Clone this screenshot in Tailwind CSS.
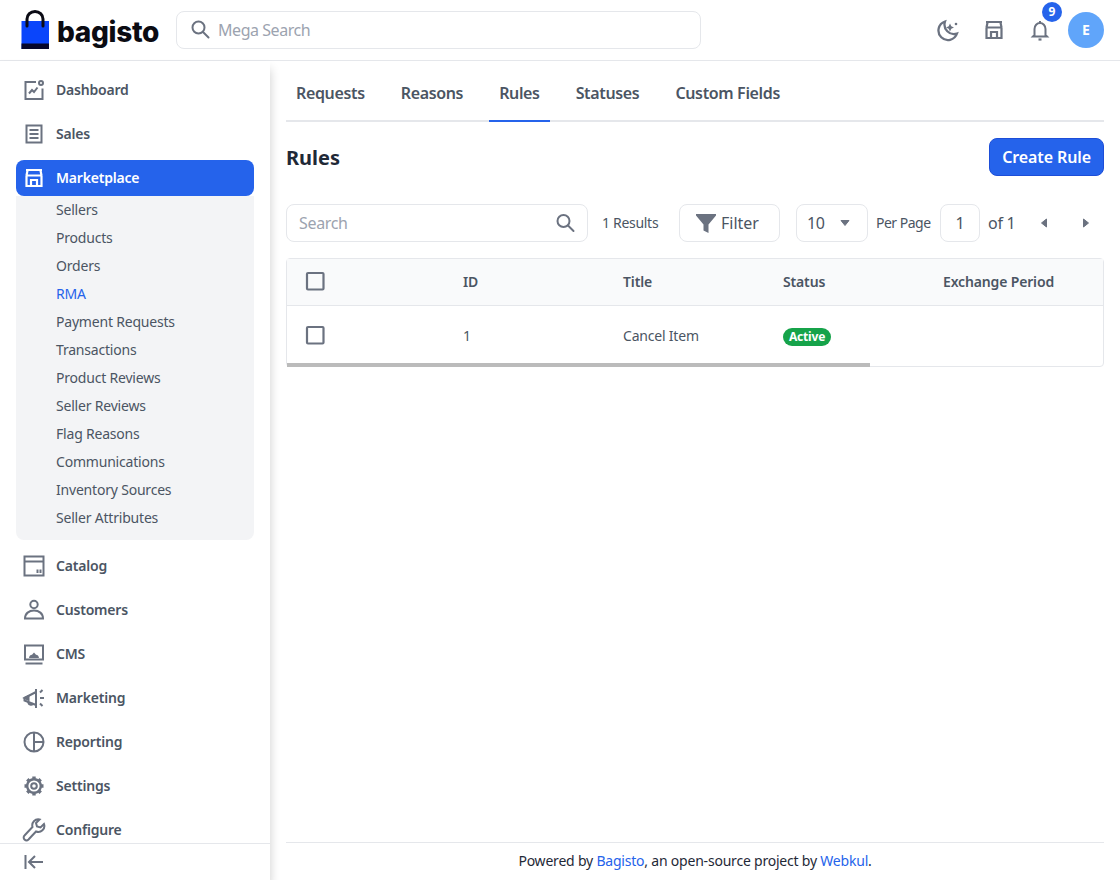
<!DOCTYPE html>
<html>
  <head>
    <meta charset="UTF-8" />
    <title>Rules</title>
    <script src="https://cdn.jsdelivr.net/npm/@tailwindcss/browser@4"></script>
  </head>
  <body class="h-screen overflow-hidden bg-white font-['Noto_Sans',sans-serif] text-[#4b5563] flex flex-col">
    <!-- top bar -->
    <header class="h-[61px] shrink-0 flex items-center justify-between border-b border-gray-200 pl-5 pr-4 bg-white">
      <div class="flex items-center">
        <div class="flex items-center w-[156px] gap-[7px]">
          <svg width="30" height="40" viewBox="0 0 30 40" class="shrink-0">
            <rect x="1.500" y="11" width="27.500" height="28" fill="#0a45fb" />
            <rect x="1.500" y="33.500" width="27.500" height="5.500" fill="#06062a" />
            <path d="M7 16V9a8 7.500 0 0 1 16 0v7" fill="none" stroke="#0b0b14" stroke-width="3" stroke-linecap="round" />
          </svg>
          <span class="font-['Inter',sans-serif] font-extrabold text-[28px] leading-none pt-[3px] tracking-[-0.3px] text-[#0b0b12]">bagisto</span>
        </div>
        <div class="w-[525px] h-[38px] border border-gray-200 rounded-lg flex items-center pl-[11px] gap-1.5">
          <svg width="24" height="24" viewBox="0 0 24 24" fill="none" stroke="#6b7280" stroke-width="2" stroke-linecap="round"><circle cx="10.500" cy="9.500" r="6" /><path d="M15 14l5.500 5.500" /></svg>
          <span class="text-[#9ca3af] text-base tracking-[-0.45px]">Mega Search</span>
        </div>
      </div>
      <div class="flex items-center">
        <svg width="24" height="24" viewBox="0 0 24 24" fill="none" stroke="#6b7280" stroke-width="2.300" class="mr-[22px]"><path d="M9 3.500a9.500 9.500 0 1 0 12 12A9.500 9.500 0 0 1 9 3.500z" /><path d="M14 5.500l1.300 2.700 2.700 1.300-2.700 1.300-1.300 2.700-1.300-2.700-2.700-1.300 2.700-1.300z" fill="#6b7280" stroke="none" /><circle cx="20" cy="6" r="1.300" fill="#6b7280" stroke="none" /></svg>
        <svg width="24" height="24" viewBox="0 0 24 24" fill="none" stroke="#6b7280" stroke-width="2.200" class="mr-[22px]"><path d="M4 4h16M3.500 9.500h17M4.500 9.500l1-5M19.500 9.500l-1-5M4.500 9.500v10.500h15V9.500M9 20v-6h6v6" /></svg>
        <div class="relative mr-[16px]">
          <svg width="24" height="24" viewBox="0 0 24 24" fill="none" stroke="#6b7280" stroke-width="2" class="block"><path d="M6.500 17V11a5.500 6 0 0 1 11 0v6l1.500 1.500h-14z" /><path d="M10.500 21.500h3" stroke-width="2.200" /><path d="M12 3v2" /></svg>
          <span class="absolute left-[14px] top-[-16px] w-5 h-5 rounded-full bg-[#2563eb] text-white text-xs font-bold flex items-center justify-center">9</span>
        </div>
        <div class="w-9 h-9 rounded-full bg-[#60a5fa] text-white font-bold text-sm flex items-center justify-center">E</div>
      </div>
    </header>

    <div class="flex flex-1 min-h-0">
      <!-- sidebar -->
      <aside class="w-[270px] shrink-0 flex flex-col bg-white shadow-[0_8px_10px_0_rgba(0,0,0,0.2)]">
        <nav class="flex-1 min-h-0 overflow-hidden px-4 pt-[11px] flex flex-col gap-2 text-sm font-semibold tracking-[-0.2px]">
          <a class="h-9 shrink-0 flex items-center gap-[10px] pl-1.5">
            <svg width="24" height="24" viewBox="0 0 24 24" fill="none" stroke="#6b7280" stroke-width="2"><path d="M14 4H3.500v17h17V10.500" /><path d="M7 15.500l3-3.500 2 2 3.500-4.500" /><circle cx="19" cy="5" r="2" /></svg>
            Dashboard
          </a>
          <a class="h-9 shrink-0 flex items-center gap-[10px] pl-1.5">
            <svg width="24" height="24" viewBox="0 0 24 24" fill="none" stroke="#6b7280" stroke-width="2"><rect x="4.500" y="3.500" width="15" height="17" /><path d="M7.500 8h9M7.500 12h9M7.500 16h9" /></svg>
            Sales
          </a>
          <div class="shrink-0">
            <a class="h-9 flex items-center gap-[10px] pl-1.5 bg-[#2563eb] text-white rounded-lg">
              <svg width="24" height="24" viewBox="0 0 24 24" fill="none" stroke="#fff" stroke-width="2.200"><path d="M4 4h16M3.500 9.500h17M4.500 9.500l1-5M19.500 9.500l-1-5M4.500 9.500v10.500h15V9.500M9 20v-6h6v6" /></svg>
              Marketplace
            </a>
            <ul class="bg-gray-100 rounded-b-lg pb-2 font-normal">
              <li class="h-7 pl-10 flex items-center">Sellers</li>
              <li class="h-7 pl-10 flex items-center">Products</li>
              <li class="h-7 pl-10 flex items-center">Orders</li>
              <li class="h-7 pl-10 flex items-center text-[#2563eb]">RMA</li>
              <li class="h-7 pl-10 flex items-center">Payment Requests</li>
              <li class="h-7 pl-10 flex items-center">Transactions</li>
              <li class="h-7 pl-10 flex items-center">Product Reviews</li>
              <li class="h-7 pl-10 flex items-center">Seller Reviews</li>
              <li class="h-7 pl-10 flex items-center">Flag Reasons</li>
              <li class="h-7 pl-10 flex items-center">Communications</li>
              <li class="h-7 pl-10 flex items-center">Inventory Sources</li>
              <li class="h-7 pl-10 flex items-center">Seller Attributes</li>
            </ul>
          </div>
          <a class="h-9 shrink-0 flex items-center gap-[10px] pl-1.5">
            <svg width="24" height="24" viewBox="0 0 24 24" fill="none" stroke="#6b7280" stroke-width="2"><rect x="2.500" y="2.500" width="19" height="19" /><path d="M2.500 7.500h19" /><path d="M15.500 19v-3.500M18.500 19v-3.500" stroke-width="2" /></svg>
            Catalog
          </a>
          <a class="h-9 shrink-0 flex items-center gap-[10px] pl-1.5">
            <svg width="24" height="24" viewBox="0 0 24 24" fill="none" stroke="#6b7280" stroke-width="2"><circle cx="12" cy="6.500" r="3.700" /><path d="M3 20.500c0-5 4-8 9-8s9 3 9 8z" /></svg>
            Customers
          </a>
          <a class="h-9 shrink-0 flex items-center gap-[10px] pl-1.5">
            <svg width="24" height="24" viewBox="0 0 24 24" fill="none" stroke="#6b7280" stroke-width="2"><rect x="3" y="3.500" width="18" height="14" /><path d="M3.500 21.500h17" /><path d="M7 16c.3-2 1.500-3.200 3-3.200l2-2.300 2 2.300c1.500 0 2.700 1.200 3 3.200z" fill="#6b7280" stroke="none" /></svg>
            CMS
          </a>
          <a class="h-9 shrink-0 flex items-center gap-[10px] pl-1.5">
            <svg width="24" height="24" viewBox="0 0 24 24" fill="none" stroke="#6b7280" stroke-width="2"><path d="M2.500 12l11.500-6v13l-11.500-4.500z" /><path d="M2.500 12l4-2v4z" fill="#6b7280" /><path d="M6.500 15.500a2.500 2.500 0 0 0 4.800 1.500" /><path d="M14 3v19" /><path d="M18 6.500l2.500-2.500M18 12h4M18 17.500l2.500 2.500" /></svg>
            Marketing
          </a>
          <a class="h-9 shrink-0 flex items-center gap-[10px] pl-1.5">
            <svg width="24" height="24" viewBox="0 0 24 24" fill="none" stroke="#6b7280" stroke-width="2"><circle cx="12" cy="12" r="9.500" /><path d="M12 2.500v19M12 12h9.500" /></svg>
            Reporting
          </a>
          <a class="h-9 shrink-0 flex items-center gap-[10px] pl-1.5">
            <svg width="24" height="24" viewBox="0 0 24 24" fill="none" stroke="#6b7280" stroke-width="2"><circle cx="12" cy="12" r="2.800" /><circle cx="12" cy="12" r="6.800" stroke-width="2.400" /><path d="M12 2.500v3M12 18.500v3M2.500 12h3M18.500 12h3M5.300 5.300l2.100 2.100M16.600 16.600l2.100 2.100M5.300 18.700l2.100-2.100M16.600 7.400l2.100-2.100" stroke-width="3.400" /></svg>
            Settings
          </a>
          <a class="h-9 shrink-0 flex items-center gap-[10px] pl-1.5">
            <svg width="24" height="24" viewBox="0 0 24 24" fill="none" stroke="#6b7280" stroke-width="2"><path d="M22 6l-3.500 3.500-3.500-1-1-3.500 3.500-3.500a6 6 0 0 0-7 7.500L2.500 17.500a2.800 2.800 0 0 0 4 4l7.500-8a6 6 0 0 0 8-7.500z" /></svg>
            Configure
          </a>
        </nav>
        <div class="h-[37px] shrink-0 border-t border-gray-200 flex items-center pl-[22px]">
          <svg width="24" height="24" viewBox="0 0 24 24" fill="none" stroke="#6b7280" stroke-width="2"><path d="M3.500 5v14M21 12H8M13 6l-6 6 6 6" /></svg>
        </div>
      </aside>

      <!-- main -->
      <main class="flex-1 min-w-0 px-4 flex flex-col">
        <div class="h-[61px] shrink-0 flex border-b-2 border-gray-200 text-base font-semibold tracking-[-0.35px]">
          <a class="px-2.5 h-[61px] flex items-center pt-1 border-b-2 border-transparent">Requests</a>
          <a class="ml-4 px-2.5 h-[61px] flex items-center pt-1 border-b-2 border-transparent">Reasons</a>
          <a class="ml-4 px-2.5 h-[61px] flex items-center pt-1 border-b-2 border-[#2563eb]">Rules</a>
          <a class="ml-4 px-2.5 h-[61px] flex items-center pt-1 border-b-2 border-transparent">Statuses</a>
          <a class="ml-4 px-2.5 h-[61px] flex items-center pt-1 border-b-2 border-transparent">Custom Fields</a>
        </div>

        <div class="flex items-center justify-between mt-4">
          <h1 class="text-xl font-bold text-[#1f2937] pt-[2px]">Rules</h1>
          <button class="h-[38px] px-3 bg-[#2563eb] border border-[#1d4ed8] rounded-lg text-white font-semibold text-base tracking-[-0.1px]">Create Rule</button>
        </div>

        <div class="flex items-center mt-7 h-[38px]">
          <div class="w-[302px] h-full border border-gray-200 rounded-lg flex items-center justify-between pl-3 pr-[10px]">
            <span class="text-[#9ca3af] text-base tracking-[-0.33px]">Search</span>
            <svg width="24" height="24" viewBox="0 0 24 24" fill="none" stroke="#6b7280" stroke-width="2" stroke-linecap="round"><circle cx="10.500" cy="10" r="6" /><path d="M15 14.500l5.500 5.500" /></svg>
          </div>
          <span class="ml-[14px] w-[77px] text-sm tracking-[-0.3px]">1 Results</span>
          <div class="w-[101px] h-full border border-gray-200 rounded-lg flex items-center pl-[14px] gap-[3px] text-base">
            <svg width="24" height="24" viewBox="0 0 24 24" fill="#6b7280"><path d="M2 3h20v1.500l-7.500 9v8.500l-5-2.500v-6l-7.500-9z" /></svg>
            Filter
          </div>
          <div class="ml-4 w-[72px] h-full border border-gray-200 rounded-lg flex items-center justify-between pl-[10px] pr-[17px] text-base">
            <span class="tracking-[-0.3px]">10</span>
            <svg width="10" height="6" viewBox="0 0 10 6" fill="#6b7280" stroke="#6b7280" stroke-linejoin="round"><path d="M1 .5h8L5 5.500z" /></svg>
          </div>
          <span class="ml-2 w-[64px] text-sm tracking-[-0.5px]">Per Page</span>
          <div class="w-10 h-full border border-gray-200 rounded-lg flex items-center justify-center text-base">1</div>
          <span class="ml-2 w-[52px] text-base tracking-[-0.3px]">of 1</span>
          <svg width="8" height="10" viewBox="0 0 8 10" fill="#6b7280" stroke="#6b7280" stroke-linejoin="round"><path d="M6.500 1v8L1.500 5z" /></svg>
          <svg width="8" height="10" viewBox="0 0 8 10" fill="#6b7280" stroke="#6b7280" stroke-linejoin="round" class="ml-[34px]"><path d="M1.500 1v8l5-4z" /></svg>
        </div>

        <div class="mt-4 border border-gray-200 rounded-sm">
          <div class="grid grid-cols-[160px_160px_160px_160px_1fr] items-center h-[47px] pl-4 bg-gray-50 border-b border-gray-200 text-sm font-semibold tracking-[-0.15px]">
            <svg width="24" height="24" viewBox="0 0 24 24" fill="none" stroke="#6b7280" stroke-width="2.200"><rect x="4" y="3" width="16.500" height="16.500" rx="1" /></svg>
            <span>ID</span><span>Title</span><span>Status</span><span>Exchange Period</span>
          </div>
          <div class="grid grid-cols-[160px_160px_160px_160px_1fr] items-center h-[57px] pl-4 pt-[3px] text-sm tracking-[-0.2px]">
            <svg width="24" height="24" viewBox="0 0 24 24" fill="none" stroke="#6b7280" stroke-width="2.200"><rect x="4" y="3" width="16.500" height="16.500" rx="1" /></svg>
            <span>1</span><span>Cancel Item</span>
            <span><span class="inline-block bg-[#16a34a] text-white text-xs font-bold rounded-full px-1.5 leading-[18px]">Active</span></span>
            <span></span>
          </div>
          <div class="h-1 -mb-px w-[583px] bg-[#bbbbbb]"></div>
        </div>

        <footer class="mt-auto h-[38px] shrink-0 border-t border-gray-200 flex items-center justify-center pb-[2px] text-sm tracking-[-0.21px] text-[#1f2937]">
          <p>Powered by <a class="text-[#2563eb]">Bagisto</a>, an open-source project by <a class="text-[#2563eb]">Webkul</a>.</p>
        </footer>
      </main>
    </div>
  </body>
</html>
